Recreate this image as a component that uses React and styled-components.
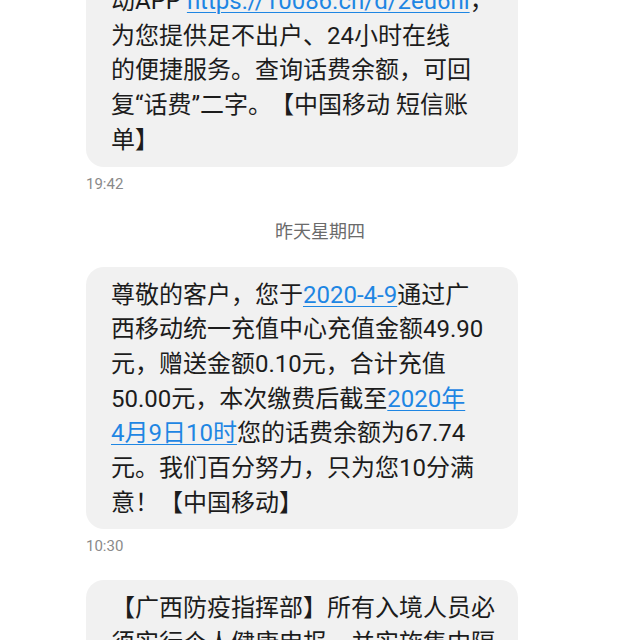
import React from "react";
import styled, { createGlobalStyle } from "styled-components";

const Global = createGlobalStyle`
  html, body { margin: 0; padding: 0; background: #ffffff; }
  body { font-family: Roboto, "Noto Sans CJK SC", sans-serif; }
`;

const Screen = styled.div`
  width: 640px;
  height: 640px;
  overflow: hidden;
  background: #ffffff;
`;

const Thread = styled.div`
  display: flex;
  flex-direction: column;
  margin-top: -27px;
  padding-left: 86px;
`;

const Group = styled.div`
  display: flex;
  flex-direction: column;
  align-items: flex-start;
  margin-bottom: 24px;
`;

const Bubble = styled.div`
  width: 432px;
  box-sizing: border-box;
  background: #f1f1f1;
  border-radius: 18px;
  padding: 11px 20px 9px 25px;
  color: #1c1c1c;
  font-family: Roboto, "Noto Sans CJK SC", sans-serif;
  font-size: 24px;
  line-height: 34.7px;
`;

const Line = styled.span`
  display: block;
  white-space: nowrap;
`;

const Punct = styled.span`
  margin-right: ${(p) => p.$gap || 0}px;
`;

const Link = styled.span`
  color: #1e86e3;
  text-decoration: underline;
  text-decoration-thickness: 1px;
  text-underline-offset: 3px;
`;

const Time = styled.div`
  margin-top: 7px;
  height: 20px;
  line-height: 20px;
  font-family: Roboto, "Noto Sans CJK SC", sans-serif;
  font-size: 15px;
  color: #8a8a8a;
`;

const DateDivider = styled.div`
  width: 468px;
  text-align: center;
  font-family: Roboto, "Noto Sans CJK SC", sans-serif;
  font-size: 18px;
  line-height: 24px;
  color: #6b6b6b;
  margin: 2px 0 23px 0;
`;

export default function App() {
  return (
    <Screen>
      <Global />
      <Thread>
        <Group>
          <Bubble>
            <Line>
              动APP <Link>https://10086.cn/d/2eu6nl</Link>，
            </Line>
            <Line>为您提供足不出户、24小时在线</Line>
            <Line>的便捷服务。查询话费余额，可回</Line>
            <Line>
              复“话费”二字<Punct $gap={10}>。</Punct>【中国移动 短信账
            </Line>
            <Line>单】</Line>
          </Bubble>
          <Time>19:42</Time>
        </Group>

        <DateDivider>昨天星期四</DateDivider>

        <Group>
          <Bubble>
            <Line>
              尊敬的客户，您于<Link>2020-4-9</Link>通过广
            </Line>
            <Line>西移动统一充值中心充值金额49.90</Line>
            <Line>元，赠送金额0.10元，合计充值</Line>
            <Line>
              50.00元，本次缴费后截至<Link>2020年</Link>
            </Line>
            <Line>
              <Link>4月9日10时</Link>您的话费余额为67.74
            </Line>
            <Line>元。我们百分努力，只为您10分满</Line>
            <Line>意！【中国移动】</Line>
          </Bubble>
          <Time>10:30</Time>
        </Group>

        <Group>
          <Bubble>
            <Line>【广西防疫指挥部】所有入境人员必</Line>
            <Line>须实行个人健康申报，并实施集中隔</Line>
            <Line>离医学观察。</Line>
          </Bubble>
        </Group>
      </Thread>
    </Screen>
  );
}
